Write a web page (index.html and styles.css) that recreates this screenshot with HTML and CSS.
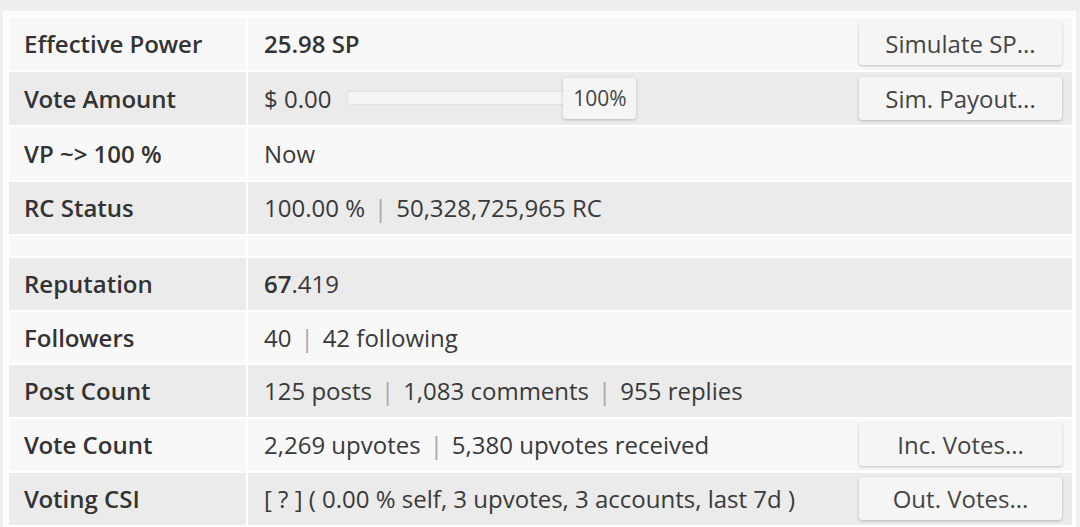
FILE: index.html
```html
<!DOCTYPE html>
<html lang="en">
<head>
<meta charset="utf-8">
<title>Account Stats</title>
<link rel="stylesheet" href="styles.css">
</head>
<body>
<div class="panel">
  <div class="grid">
    <div class="cell label light">Effective Power</div>
    <div class="cell value light split">
      <span class="strong">25.98 SP</span>
      <button class="btn">Simulate SP...</button>
    </div>

    <div class="cell label dark">Vote Amount</div>
    <div class="cell value dark split">
      <div class="group">
        <span>$ 0.00</span>
        <div class="slider">
          <div class="track"></div>
          <div class="handle">100%</div>
        </div>
      </div>
      <button class="btn">Sim. Payout...</button>
    </div>

    <div class="cell label light">VP ~&gt; 100 %</div>
    <div class="cell value light">Now</div>

    <div class="cell label dark">RC Status</div>
    <div class="cell value dark">100.00 %<span class="sep">|</span>50,328,725,965 RC</div>

    <div class="cell light spacer"></div>
    <div class="cell light spacer"></div>

    <div class="cell label dark">Reputation</div>
    <div class="cell value dark"><span class="strong">67</span>.419</div>

    <div class="cell label light">Followers</div>
    <div class="cell value light">40<span class="sep">|</span>42 following</div>

    <div class="cell label dark">Post Count</div>
    <div class="cell value dark">125 posts<span class="sep">|</span>1,083 comments<span class="sep">|</span>955 replies</div>

    <div class="cell label light">Vote Count</div>
    <div class="cell value light split">
      <span>2,269 upvotes<span class="sep">|</span>5,380 upvotes received</span>
      <button class="btn">Inc. Votes...</button>
    </div>

    <div class="cell label dark">Voting CSI</div>
    <div class="cell value dark split">
      <span>[ ? ] ( 0.00 % self, 3 upvotes, 3 accounts, last 7d )</span>
      <button class="btn">Out. Votes...</button>
    </div>
  </div>
</div>
</body>
</html>
```
FILE: styles.css
```css
html, body {
  margin: 0;
  height: 100%;
}
body {
  background: #efefef;
  padding: 11px 0 0 3px;
  box-sizing: border-box;
  overflow: hidden;
  font-family: "Open Sans", "Noto Sans", sans-serif;
  font-size: 24px;
  color: #393939;
}
.panel {
  display: inline-block;
  background: #fafafa;
  border: 1px solid #ffffff;
  padding: 4px 1px 4px 3px;
}
.grid {
  display: grid;
  grid-template-columns: 237px 824px;
  grid-template-rows: 52px 53px 53px 52px 20px 52px 51px 52px 52px 52px;
  gap: 2px;
  padding: 2px;
  background: #ffffff;
}
.cell {
  display: flex;
  align-items: center;
  white-space: nowrap;
  padding-bottom: 1px;
}
.light { background: #f8f8f8; }
.dark { background: #ebebeb; }
.label {
  padding-left: 15px;
  font-family: "Open Sans SemiBold", "Open Sans", sans-serif;
  font-weight: 600;
  color: #333333;
}
.value {
  padding-left: 16px;
  padding-right: 10px;
}
.split {
  justify-content: space-between;
}
.strong {
  font-family: "Open Sans SemiBold", "Open Sans", sans-serif;
  font-weight: 600;
  color: #333333;
}
.sep {
  color: #a8a8a8;
  margin: 0 9px;
}
.group {
  display: flex;
  align-items: center;
}
.slider {
  display: flex;
  align-items: center;
  margin-left: 16px;
}
.track {
  width: 215px;
  height: 12px;
  background: #f4f4f4;
  border: 1px dotted #cfcfcf;
  border-right: none;
  border-radius: 2px 0 0 2px;
}
.handle {
  width: 73px;
  height: 41px;
  display: flex;
  align-items: center;
  justify-content: center;
  background: #f5f5f5;
  border-radius: 3px;
  box-shadow: 0 1px 3px rgba(0, 0, 0, 0.22);
  font-size: 21px;
  color: #444;
}
.btn {
  width: 203px;
  height: 43px;
  border: none;
  border-radius: 3px;
  background: #f5f5f5;
  box-shadow: 0 1px 3px rgba(0, 0, 0, 0.24);
  font-family: inherit;
  font-size: 24px;
  color: #444;
  padding: 0;
  flex-shrink: 0;
}
```
